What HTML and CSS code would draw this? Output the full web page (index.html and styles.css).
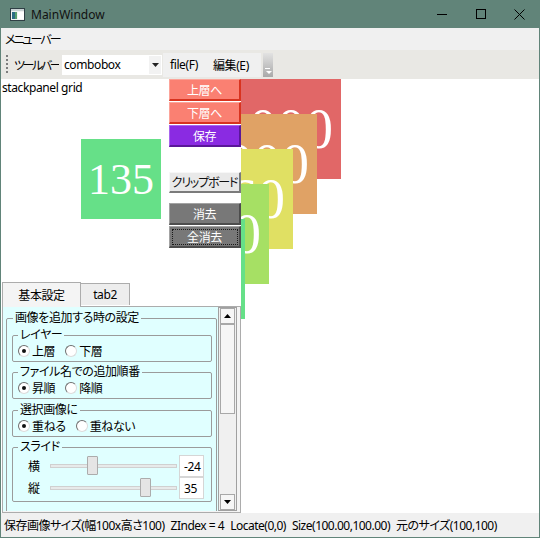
FILE: index.html
```html
<!DOCTYPE html>
<html>
<head>
<meta charset="utf-8">
<title>MainWindow</title>
<link rel="stylesheet" href="styles.css">
</head>
<body>

<div class="window">

  <div class="titlebar">
    <svg class="appicon" width="15" height="13" viewBox="0 0 15 13">
      <rect x="0.5" y="0.5" width="14" height="12" fill="#f2f2f2" stroke="#2f3f44"/>
      <rect x="1" y="1" width="13" height="2" fill="#c9d2d4"/>
      <rect x="2" y="4" width="3" height="7" fill="#2c6c84"/>
      <rect x="5" y="4" width="2" height="7" fill="#5aa06e"/>
      <rect x="8" y="4" width="6" height="7" fill="#ffffff"/>
    </svg>
    <span class="title">MainWindow</span>
    <div class="caption">
      <span class="cbtn"><svg width="10" height="10" viewBox="0 0 10 10"><path d="M0 5.5h10" stroke="#000" stroke-width="1"/></svg></span>
      <span class="cbtn"><svg width="10" height="10" viewBox="0 0 10 10"><rect x="0.5" y="0.5" width="9" height="9" fill="none" stroke="#000"/></svg></span>
      <span class="cbtn"><svg width="11" height="11" viewBox="0 0 11 11"><path d="M0.5 0.5l10 10M10.5 0.5l-10 10" stroke="#000" stroke-width="1"/></svg></span>
    </div>
  </div>

  <div class="menubar"><span>メニューバー</span></div>

  <div class="toolbar">
    <span class="grip"></span>
    <span class="tblabel">ツールバー</span>
    <div class="combo">
      <span class="combotext">combobox</span>
      <span class="combobtn"><svg width="7" height="4" viewBox="0 0 7 4"><path d="M0 0h7l-3.5 4z" fill="#222"/></svg></span>
    </div>
    <div class="tbmenu">
      <span>file(F)</span>
      <span>編集(E)</span>
    </div>
    <span class="overflow">
      <svg width="7" height="6" viewBox="0 0 7 6"><path d="M0 0.5h5" stroke="#fff"/><path d="M1 3h6l-3 3z" fill="#fff"/></svg>
    </span>
  </div>

  <div class="content">

    <div class="canvas">
      <div class="pic red">000</div>
      <div class="pic orange">000</div>
      <div class="pic yellow">160</div>
      <div class="pic lime">100</div>
      <div class="pic green">135</div>
    </div>

    <div class="side">
      <div class="top">
        <div class="leftcol">
          <div class="caption-text">stackpanel grid</div>
          <div class="preview">135</div>
        </div>
        <div class="buttons">
          <div class="btn salmon">上層へ</div>
          <div class="btn salmon">下層へ</div>
          <div class="btn violet">保存</div>
          <div class="btn plain clip">クリップボード</div>
          <div class="btn dark erase">消去</div>
          <div class="btn dark"><span class="focus">全消去</span></div>
        </div>
      </div>

      <div class="tabs">
        <div class="tabheader">
          <span class="tab selected">基本設定</span>
          <span class="tab second">tab2</span>
        </div>
        <div class="tabpanel">
          <div class="scrollarea">
            <fieldset class="group outer">
              <legend>画像を追加する時の設定</legend>

              <fieldset class="group inner">
                <legend>レイヤー</legend>
                <div class="radios">
                  <span class="radio checked"><i></i>上層</span>
                  <span class="radio"><i></i>下層</span>
                </div>
              </fieldset>

              <fieldset class="group inner">
                <legend>ファイル名での追加順番</legend>
                <div class="radios">
                  <span class="radio checked"><i></i>昇順</span>
                  <span class="radio"><i></i>降順</span>
                </div>
              </fieldset>

              <fieldset class="group inner">
                <legend>選択画像に</legend>
                <div class="radios">
                  <span class="radio checked"><i></i>重ねる</span>
                  <span class="radio"><i></i>重ねない</span>
                </div>
              </fieldset>

              <fieldset class="group inner">
                <legend>スライド</legend>
                <div class="sliderrow">
                  <span class="slabel">横</span>
                  <div class="slider"><span class="track"></span><span class="thumb" style="left:37px"></span></div>
                  <span class="numbox">-24</span>
                </div>
                <div class="sliderrow">
                  <span class="slabel">縦</span>
                  <div class="slider"><span class="track"></span><span class="thumb" style="left:90px"></span></div>
                  <span class="numbox">35</span>
                </div>
              </fieldset>
            </fieldset>
          </div>
          <div class="vscroll">
            <span class="sbbtn"><svg width="7" height="4" viewBox="0 0 7 4"><path d="M0 4h7l-3.5-4z" fill="#000"/></svg></span>
            <span class="sbthumb"></span>
            <span class="sbtrack"></span>
            <span class="sbbtn"><svg width="7" height="4" viewBox="0 0 7 4"><path d="M0 0h7l-3.5 4z" fill="#000"/></svg></span>
          </div>
        </div>
      </div>
    </div>

  </div>

  <div class="statusbar">
    <span>保存画像サイズ(幅100x高さ100)</span>
    <span>ZIndex = 4</span>
    <span>Locate(0,0)</span>
    <span>Size(100.00,100.00)</span>
    <span>元のサイズ(100,100)</span>
  </div>

</div>

</body>
</html>
```

FILE: styles.css
```css
* {
  box-sizing: border-box;
}

html, body {
  margin: 0;
}

body {
  width: 540px;
  height: 538px;
  overflow: hidden;
  background-color: #618479;
  font-family: "Noto Sans", "Noto Sans CJK JP", sans-serif;
  font-feature-settings: "palt";
  font-size: 12px;
  letter-spacing: -0.4px;
  color: #000;
  white-space: nowrap;
}

.window {
  width: 540px;
  height: 538px;
  display: flex;
  flex-direction: column;
  padding: 0 1px 1px 1px;
  background-color: #618479;
}

/* title bar */

.titlebar {
  height: 28px;
  flex: none;
  display: flex;
  align-items: center;
}

.appicon {
  margin-left: 9px;
  margin-top: 1px;
}

.title {
  margin-left: 6px;
  color: #111;
  font-size: 12px;
  letter-spacing: 0;
}

.caption {
  margin-left: auto;
  display: flex;
  height: 28px;
}

.cbtn {
  width: 39px;
  display: flex;
  align-items: center;
  justify-content: center;
}

/* menu and toolbar */

.menubar {
  height: 22px;
  flex: none;
  background-color: #f0f0f0;
  display: flex;
  align-items: center;
  padding-left: 4px;
  letter-spacing: -2px;
}

.toolbar {
  height: 29px;
  flex: none;
  background-color: #e9e8e4;
  display: flex;
  align-items: center;
}

.grip {
  width: 2px;
  height: 20px;
  margin-left: 5px;
  background: repeating-linear-gradient(to bottom, #7d7d7d 0 2px, transparent 2px 4px);
}

.tblabel {
  width: 45px;
  margin-left: 6px;
  margin-right: 3px;
  letter-spacing: -2.4px;
  overflow: hidden;
}

.combo {
  width: 100px;
  height: 20px;
  background-color: #fff;
  display: flex;
  align-items: center;
}

.combotext {
  flex: 1;
  padding-left: 2px;
}

.combobtn {
  width: 12px;
  height: 18px;
  display: flex;
  align-items: center;
  justify-content: center;
  background-color: #f2f2f2;
  margin-right: 1px;
}

.tbmenu {
  width: 98px;
  height: 24px;
  margin-left: 1px;
  background-color: #f0f0f0;
  display: flex;
  align-items: center;
  gap: 15px;
  padding-left: 7px;
}

.overflow {
  width: 10px;
  height: 24px;
  margin-left: 2px;
  margin-top: 1px;
  background: linear-gradient(to bottom, #e2e2e2, #a9a9a9);
  display: flex;
  align-items: flex-end;
  justify-content: center;
  padding-bottom: 3px;
}

/* main area */

.content {
  flex: 1;
  min-height: 0;
  overflow: hidden;
  position: relative;
  background-color: #fff;
  display: flex;
}

.canvas {
  position: absolute;
  left: 0;
  top: 0;
  right: 0;
  bottom: 0;
  overflow: hidden;
}

.pic {
  position: absolute;
  width: 100px;
  height: 100px;
  display: flex;
  align-items: center;
  justify-content: center;
  color: #fff;
  font-family: "Liberation Serif", serif;
  font-size: 56px;
  letter-spacing: 0;
}

.red { left: 240px; top: 0px; background-color: #e16767; }
.orange { left: 216px; top: 35px; background-color: #e0a265; }
.yellow { left: 192px; top: 70px; background-color: #e0e063; }
.lime { left: 168px; top: 105px; background-color: #a6e064; }
.green { left: 144px; top: 140px; background-color: #66e088; }

.side {
  position: relative;
  width: 240px;
  height: 100%;
  background-color: #fff;
  display: flex;
  flex-direction: column;
}

.top {
  height: 202px;
  flex: none;
  display: flex;
}

.leftcol {
  width: 168px;
}

.caption-text {
  padding-left: 1px;
  line-height: 17px;
}

.preview {
  width: 80px;
  height: 80px;
  margin-left: 80px;
  margin-top: 43px;
  background-color: #66e088;
  color: #fff;
  font-family: "Liberation Serif", serif;
  font-size: 44px;
  letter-spacing: 0;
  display: flex;
  align-items: center;
  justify-content: center;
}

.buttons {
  width: 72px;
  display: flex;
  flex-direction: column;
}

.btn {
  height: 22px;
  flex: none;
  margin-bottom: 1px;
  display: flex;
  align-items: center;
  justify-content: center;
  color: #fff;
  border-style: solid;
  border-width: 1px 2px 2px 1px;
}

.salmon {
  background-color: #fa8072;
  border-color: #fca49a #d8331f #d8331f #fca49a;
}

.violet {
  background-color: #8a2be2;
  border-color: #a866ee #5a1799 #5a1799 #a866ee;
}

.plain {
  background-color: #e9e9e9;
  border-color: #f7f7f7 #7b7b7b #7b7b7b #f7f7f7;
  color: #111;
}

.clip {
  margin-top: 24px;
  height: 21px;
  letter-spacing: -1.2px;
}

.dark {
  background-color: #787878;
  border-color: #a3a3a3 #4d4d4d #4d4d4d #a3a3a3;
}

.erase {
  margin-top: 9px;
}

.focus {
  width: 66px;
  height: 16px;
  border: 1px dotted #1a1a1a;
  display: flex;
  align-items: center;
  justify-content: center;
}

/* tab control */

.tabs {
  flex: 1;
  min-height: 0;
  display: flex;
  flex-direction: column;
  margin-left: 1px;
}

.tabheader {
  height: 25px;
  flex: none;
  display: flex;
  align-items: flex-end;
}

.tab {
  height: 22px;
  border: 1px solid #acacac;
  border-bottom: 0;
  background-color: #ededed;
  display: flex;
  align-items: center;
  justify-content: center;
  margin-bottom: 1px;
}

.tab.selected {
  width: 79px;
  height: 25px;
  background-color: #f4f4f4;
  margin-bottom: -1px;
  position: relative;
}

.tab.second {
  width: 49px;
  border-left: 0;
}

.tabpanel {
  flex: 1;
  min-height: 0;
  border: 1px solid #acacac;
  background-color: #f4f4f4;
  display: flex;
  padding: 0 3px 1px 0;
  overflow: hidden;
}

.scrollarea {
  flex: 1;
  background-color: #e0ffff;
  overflow: hidden;
  padding-top: 3px;
}

.group {
  border: 1px solid #9b9b9b;
  border-radius: 2px;
  margin: 0;
  min-width: 0;
}

.group legend {
  padding: 0 2px;
  line-height: 16px;
}

.outer {
  margin: 0 1px 0 3px;
  padding: 1px 4px 40px 5px;
}

.outer > legend {
  margin-left: 1px;
}

.inner {
  padding: 0 4px 2px 5px;
  margin-top: 2px;
}

.inner:first-of-type {
  margin-top: 0;
}

.inner:nth-of-type(3) {
  margin-top: 3px;
}

.radios {
  height: 16px;
  display: flex;
  align-items: center;
}

.radio {
  display: flex;
  align-items: center;
  gap: 2px;
  margin-right: 10px;
}

.radio i {
  width: 12px;
  height: 12px;
  border-radius: 50%;
  border: 1px solid;
  border-color: #6f6f6f #dcdcdc #dcdcdc #6f6f6f;
  background-color: #fff;
  display: flex;
  align-items: center;
  justify-content: center;
}

.radio.checked i::after {
  content: "";
  width: 4px;
  height: 4px;
  border-radius: 50%;
  background-color: #111;
}

.sliderrow {
  height: 22px;
  display: flex;
  align-items: center;
}

.slabel {
  width: 32px;
  padding-left: 10px;
}

.slider {
  position: relative;
  width: 127px;
  height: 22px;
}

.track {
  position: absolute;
  left: 0;
  right: 0;
  top: 9px;
  height: 4px;
  background-color: #e7eaea;
  border: 1px solid #d0d0d0;
}

.thumb {
  position: absolute;
  top: 1px;
  width: 11px;
  height: 19px;
  background-color: #e5e5e5;
  border: 1px solid #acacac;
  border-radius: 1px;
}

.numbox {
  width: 25px;
  height: 22px;
  margin-left: 2px;
  background-color: #fff;
  border: 1px solid #d6d6d6;
  display: flex;
  align-items: center;
  padding-left: 4px;
}

/* scroll bar */

.vscroll {
  width: 19px;
  display: flex;
  flex-direction: column;
  border: 1px solid #a0a0a0;
  background-color: #f0f0f0;
  padding: 0 1px;
}

.sbbtn {
  height: 16px;
  flex: none;
  display: flex;
  align-items: center;
  justify-content: center;
  background-color: #f6f6f6;
  border: 1px solid #a8a8a8;
}

.sbthumb {
  height: 90px;
  flex: none;
  background-color: #f6f6f6;
  border: 1px solid #a8a8a8;
}

.sbtrack {
  flex: 1;
}

/* status bar */

.statusbar {
  height: 24px;
  flex: none;
  background-color: #f0f0f0;
  display: flex;
  align-items: center;
  padding-left: 3px;
  gap: 6px;
  letter-spacing: -0.5px;
}
```
